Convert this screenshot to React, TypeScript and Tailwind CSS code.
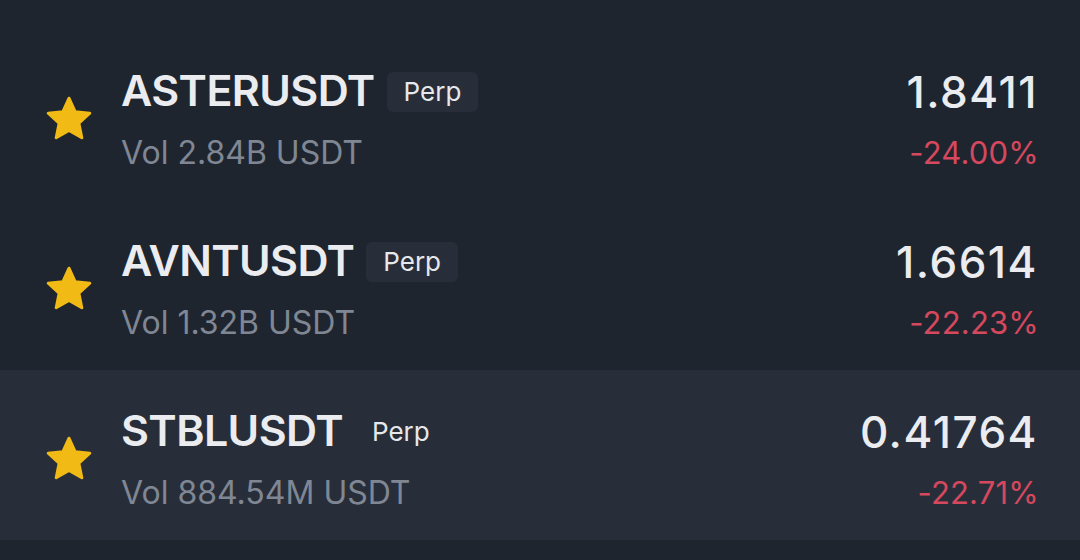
type Ticker = {
  symbol: string;
  volume: string;
  price: string;
  change: string;
  active?: boolean;
};

const tickers: Ticker[] = [
  { symbol: 'ASTERUSDT', volume: 'Vol 2.84B USDT', price: '1.8411', change: '-24.00%' },
  { symbol: 'AVNTUSDT', volume: 'Vol 1.32B USDT', price: '1.6614', change: '-22.23%' },
  { symbol: 'STBLUSDT', volume: 'Vol 884.54M USDT', price: '0.41764', change: '-22.71%', active: true },
];

function StarIcon() {
  return (
    <svg viewBox="0 0 24 24" className="h-[50px] w-[50px] shrink-0">
      <polygon
        points="12,2 14.94,8.46 21.99,9.26 16.76,14.05 18.17,20.99 12,17.5 5.83,20.99 7.24,14.05 2.01,9.26 9.06,8.46"
        fill="#f1ba14"
        stroke="#f1ba14"
        strokeWidth={1.4}
        strokeLinejoin="round"
      />
    </svg>
  );
}

function Row({ t }: { t: Ticker }) {
  return (
    <div
      className={`flex h-[170px] items-start pl-[44px] pr-[43px] ${
        t.active ? 'bg-[#282e39]' : ''
      }`}
    >
      <div className="mt-[64px]">
        <StarIcon />
      </div>
      <div className="ml-[27px] flex flex-1 flex-col pt-[38px]">
        <div className="flex h-[44px] items-center gap-[12px]">
          <span className="text-[43px] font-semibold leading-[44px] tracking-[-0.6px] text-[#eaecef]">
            {t.symbol}
          </span>
          {/* badge bg is the same shade as the hovered row, so it vanishes there */}
          <span className="mt-[3px] flex h-[40px] items-center rounded-[6px] bg-[#282e39] px-[17px] text-[26px] leading-none text-[#e6e8eb]">
            Perp
          </span>
        </div>
        <div className="mt-[23px] text-[32px] leading-[36px] text-[#808794]">{t.volume}</div>
      </div>
      <div className="flex flex-col items-end pt-[40px]">
        <div className="-mr-[1px] h-[42px] text-[44px] font-medium leading-[44px] tracking-[1.5px] text-[#eaecef]">
          {t.price}
        </div>
        <div className="-mr-[2px] mt-[23px] text-[31px] leading-[36px] tracking-[0.2px] text-[#d6485e]">
          {t.change}
        </div>
      </div>
    </div>
  );
}

export default function App() {
  return (
    <div
      className="h-[560px] w-[1080px] overflow-hidden bg-[#1f252e] pt-[30px]"
      style={{ fontFamily: 'Inter, "Liberation Sans", sans-serif' }}
    >
      {tickers.map((t) => (
        <Row key={t.symbol} t={t} />
      ))}
    </div>
  );
}
